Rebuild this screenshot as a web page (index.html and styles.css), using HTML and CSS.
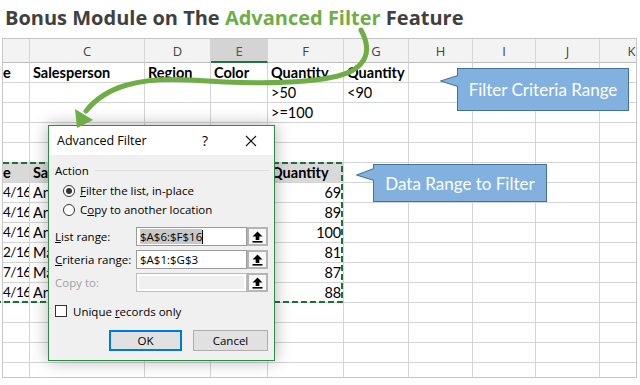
FILE: index.html
```html
<!DOCTYPE html>
<html>
<head>
<meta charset="utf-8">
<link rel="stylesheet" href="styles.css">
</head>
<body>
<h1 class="title">Bonus Module on The <span class="hl">Advanced Filter</span> Feature</h1>
<div class="sheet">
  <div class="grid">
    <div class="c h"></div><div class="c h">C</div><div class="c h">D</div><div class="c h sel">E</div><div class="c h">F</div><div class="c h">G</div><div class="c h">H</div><div class="c h">I</div><div class="c h">J</div><div class="c h">K</div>

    <div class="c b e0">e</div><div class="c b">Salesperson</div><div class="c b">Region</div><div class="c b">Color</div><div class="c b">Quantity</div><div class="c b">Quantity</div><div class="c"></div><div class="c"></div><div class="c"></div><div class="c"></div>

    <div class="c"></div><div class="c"></div><div class="c"></div><div class="c"></div><div class="c">&gt;50</div><div class="c">&lt;90</div><div class="c"></div><div class="c"></div><div class="c"></div><div class="c"></div>

    <div class="c"></div><div class="c"></div><div class="c"></div><div class="c"></div><div class="c">&gt;=100</div><div class="c"></div><div class="c"></div><div class="c"></div><div class="c"></div><div class="c"></div>

    <div class="c"></div><div class="c"></div><div class="c"></div><div class="c"></div><div class="c"></div><div class="c"></div><div class="c"></div><div class="c"></div><div class="c"></div><div class="c"></div>

    <div class="c"></div><div class="c"></div><div class="c"></div><div class="c"></div><div class="c"></div><div class="c"></div><div class="c"></div><div class="c"></div><div class="c"></div><div class="c"></div>

    <div class="c b g e0">e</div><div class="c b g">Sa</div><div class="c b g"></div><div class="c b g"></div><div class="c b g">Quantity</div><div class="c"></div><div class="c"></div><div class="c"></div><div class="c"></div><div class="c"></div>

    <div class="c r d">4/16</div><div class="c">An</div><div class="c"></div><div class="c"></div><div class="c r">69</div><div class="c"></div><div class="c"></div><div class="c"></div><div class="c"></div><div class="c"></div>

    <div class="c r d">4/16</div><div class="c">An</div><div class="c"></div><div class="c"></div><div class="c r">89</div><div class="c"></div><div class="c"></div><div class="c"></div><div class="c"></div><div class="c"></div>

    <div class="c r d">4/16</div><div class="c">An</div><div class="c"></div><div class="c"></div><div class="c r">100</div><div class="c"></div><div class="c"></div><div class="c"></div><div class="c"></div><div class="c"></div>

    <div class="c r d">2/16</div><div class="c">Ma</div><div class="c"></div><div class="c"></div><div class="c r">81</div><div class="c"></div><div class="c"></div><div class="c"></div><div class="c"></div><div class="c"></div>

    <div class="c r d">7/16</div><div class="c">Ma</div><div class="c"></div><div class="c"></div><div class="c r">87</div><div class="c"></div><div class="c"></div><div class="c"></div><div class="c"></div><div class="c"></div>

    <div class="c r d">4/16</div><div class="c">An</div><div class="c"></div><div class="c"></div><div class="c r">88</div><div class="c"></div><div class="c"></div><div class="c"></div><div class="c"></div><div class="c"></div>

    <div class="c"></div><div class="c"></div><div class="c"></div><div class="c"></div><div class="c"></div><div class="c"></div><div class="c"></div><div class="c"></div><div class="c"></div><div class="c"></div>

    <div class="c"></div><div class="c"></div><div class="c"></div><div class="c"></div><div class="c"></div><div class="c"></div><div class="c"></div><div class="c"></div><div class="c"></div><div class="c"></div>

    <div class="c"></div><div class="c"></div><div class="c"></div><div class="c"></div><div class="c"></div><div class="c"></div><div class="c"></div><div class="c"></div><div class="c"></div><div class="c"></div>

    <div class="c"></div><div class="c"></div><div class="c"></div><div class="c"></div><div class="c"></div><div class="c"></div><div class="c"></div><div class="c"></div><div class="c"></div><div class="c"></div>
  </div>
</div>

<svg class="overlay" width="640" height="385" viewBox="0 0 640 385">
  <rect x="-6" y="163" width="348" height="139" fill="none" stroke="#1f6e3b" stroke-width="2" stroke-dasharray="6 3"/>
</svg>

<div class="dialog">
  <div class="dlg-title">
    <span class="dlg-name">Advanced Filter</span>
    <span class="dlg-help">?</span>
    <span class="dlg-close"><svg width="12" height="12" viewBox="0 0 12 12"><path d="M1 1L11 11M11 1L1 11" stroke="#111" stroke-width="1.1"/></svg></span>
  </div>
  <div class="dlg-body">
    <div class="group"><span>Action</span><span class="group-line"></span></div>
    <div class="radio-row first"><span class="radio on"></span><span><u>F</u>ilter the list, in-place</span></div>
    <div class="radio-row"><span class="radio"></span><span>C<u>o</u>py to another location</span></div>

    <div class="field first">
      <span class="flabel"><u>L</u>ist range:</span>
      <span class="finput"><span class="selected">$A$6:$F$16</span><span class="caret"></span></span>
      <span class="fbtn"><svg width="11" height="12" viewBox="0 0 11 12"><path d="M5.5 0.5L10.5 5.5H7.3V9H3.7V5.5H0.5Z" fill="#000"/><rect x="0.5" y="10" width="10" height="1.6" fill="#000"/></svg></span>
    </div>
    <div class="field">
      <span class="flabel"><u>C</u>riteria range:</span>
      <span class="finput">$A$1:$G$3</span>
      <span class="fbtn"><svg width="11" height="12" viewBox="0 0 11 12"><path d="M5.5 0.5L10.5 5.5H7.3V9H3.7V5.5H0.5Z" fill="#000"/><rect x="0.5" y="10" width="10" height="1.6" fill="#000"/></svg></span>
    </div>
    <div class="field disabled">
      <span class="flabel">Copy to:</span>
      <span class="finput off"></span>
      <span class="fbtn"><svg width="11" height="12" viewBox="0 0 11 12"><path d="M5.5 0.5L10.5 5.5H7.3V9H3.7V5.5H0.5Z" fill="#000"/><rect x="0.5" y="10" width="10" height="1.6" fill="#000"/></svg></span>
    </div>

    <div class="check-row"><span class="checkbox"></span><span>Unique <u>r</u>ecords only</span></div>

    <div class="buttons">
      <span class="btn ok">OK</span>
      <span class="btn">Cancel</span>
    </div>
  </div>
</div>

<svg class="overlay" width="640" height="385" viewBox="0 0 640 385">
  <path d="M361 30 C372 50 368 68 338 76 C305 84 250 84 190 80 C140 77 106 86 86 111" fill="none" stroke="#70ad47" stroke-width="5" stroke-linecap="round"/>
  <polygon points="77,128 75,109 93,120" fill="#70ad47"/>
</svg>

<div class="callout c1">
  <svg class="pointer" width="20" height="45" viewBox="0 0 20 45"><polygon points="0,13 19,7 19,19" fill="#82b1e0"/><polyline points="18,7.5 0.5,13 18,18.5" fill="none" stroke="#41719c" stroke-width="1"/></svg>
  Filter Criteria Range
</div>
<div class="callout c2">
  <svg class="pointer" width="20" height="40" viewBox="0 0 20 40"><polygon points="0,11 19,4 19,17" fill="#82b1e0"/><polyline points="18,4.5 0.5,11 18,16.5" fill="none" stroke="#41719c" stroke-width="1"/></svg>
  Data Range to Filter
</div>
</body>
</html>
```

FILE: styles.css
```css
* { box-sizing: border-box; }

body {
  margin: 0;
  width: 640px;
  height: 385px;
  overflow: hidden;
  position: relative;
  background: #fff;
  font-family: Lato, "Liberation Sans", sans-serif;
}

.title {
  margin: 0;
  height: 38px;
  padding: 5px 0 0 5px;
  font-family: "Open Sans", sans-serif;
  font-weight: 700;
  font-size: 20px;
  line-height: 26px;
  color: #404040;
  white-space: nowrap;
}
.title .hl { color: #70ad47; }

.sheet {
  margin-left: 2px;
  width: 635px;
  height: 340px;
  border: 1px solid #c6c6c6;
  overflow: hidden;
}

.grid {
  display: grid;
  grid-template-columns: 27px 115px 66px 57px 76px 65px 64px 63px 64px 64px;
  grid-template-rows: 24px repeat(16, 20px);
  width: 661px;
}

.c {
  border-right: 1px solid #d4d4d4;
  border-bottom: 1px solid #d4d4d4;
  padding: 0 3px;
  font-size: 14.5px;
  line-height: 19px;
  color: #000;
  white-space: nowrap;
  overflow: hidden;
}
.c.b { font-weight: 700; }
.c.r { text-align: right; padding: 0 2px 0 0; letter-spacing: -0.2px; }
.c.d { font-size: 13.5px; letter-spacing: -0.5px; padding: 0 1px 0 0; }
.c.g { background: #d9d9d9; }
.c.e0 { padding-left: 0; }

.c.h {
  background: #f3f3f3;
  text-align: center;
  font-family: "Open Sans", sans-serif;
  font-size: 13px;
  line-height: 25px;
  color: #444;
  border-bottom-color: #bdbdbd;
  border-right-color: #d6d6d6;
}
.c.h.sel {
  background: #d4d4d4;
  color: #1e6e3f;
  border-bottom: 2px solid #217346;
}

.overlay {
  position: absolute;
  left: 0;
  top: 0;
  pointer-events: none;
}

/* dialog */
.dialog {
  position: absolute;
  left: 48px;
  top: 125px;
  width: 227px;
  height: 236px;
  border: 1px solid #2e8b45;
  background: #f0f0f0;
  box-shadow: 0 0 16px rgba(0, 0, 0, 0.3);
  font-family: "Open Sans", sans-serif;
  font-size: 11.5px;
  color: #000;
  display: flex;
  flex-direction: column;
}
.dlg-title {
  height: 29px;
  background: #fff;
  display: flex;
  align-items: center;
  padding-left: 8px;
  font-size: 12.5px;
}
.dlg-name { flex: 1; }
.dlg-help {
  width: 46px;
  text-align: center;
  font-size: 14px;
}
.dlg-close {
  width: 46px;
  display: flex;
  justify-content: center;
  align-items: center;
}
.dlg-body {
  flex: 1;
  padding: 7px 5px 0 6px;
}
.group {
  display: flex;
  align-items: center;
  gap: 6px;
  height: 16px;
}
.group-line {
  flex: 1;
  height: 1px;
  background: #dcdcdc;
}
.radio-row {
  display: flex;
  align-items: center;
  gap: 5px;
  height: 19px;
  padding-left: 8px;
}
.radio-row.first { margin-top: 3px; }
.radio {
  width: 12px;
  height: 12px;
  border: 1px solid #333;
  border-radius: 50%;
  background: #fff;
  position: relative;
}
.radio.on::after {
  content: "";
  position: absolute;
  left: 2px;
  top: 2px;
  width: 6px;
  height: 6px;
  border-radius: 50%;
  background: #333;
}

.field {
  display: flex;
  align-items: center;
  height: 19px;
  margin-top: 4px;
}
.field.first { margin-top: 8px; }
.flabel { width: 81px; }
.field.disabled .flabel { color: #a0a0a0; }
.finput {
  width: 111px;
  height: 19px;
  border: 1px solid #9a9a9a;
  background: #fff;
  padding: 0 3px;
  line-height: 17px;
  display: flex;
  align-items: center;
}
.finput.off {
  border-color: #bcbcbc;
  background: #f0f0f0;
  box-shadow: inset 0 0 0 2px #fff;
}
.selected { background: #c8c8c8; line-height: 15px; }
.caret { width: 1px; height: 14px; background: #000; }
.fbtn {
  width: 21px;
  height: 19px;
  border: 2px solid #b4b4b4;
  background: #f7f7f7;
  display: flex;
  align-items: center;
  justify-content: center;
}

.check-row {
  display: flex;
  align-items: center;
  gap: 6px;
  height: 16px;
  margin-top: 11px;
}
.checkbox {
  width: 12px;
  height: 12px;
  border: 1px solid #333;
  background: #fff;
}

.buttons {
  display: flex;
  justify-content: flex-end;
  gap: 11px;
  margin-top: 11px;
  padding-right: 1px;
}
.btn {
  width: 75px;
  height: 21px;
  border: 1px solid #adadad;
  background: #e1e1e1;
  display: flex;
  align-items: center;
  justify-content: center;
}
.btn.ok {
  width: 73px;
  border: 2px solid #0078d7;
}

/* callouts */
.callout {
  position: absolute;
  background: #82b1e0;
  border: 1px solid #41719c;
  color: #fff;
  font-family: Lato, sans-serif;
  font-size: 17px;
  display: flex;
  align-items: center;
  justify-content: center;
}
.callout .pointer {
  position: absolute;
  left: -18px;
  top: -1px;
}
.c1 { left: 457px; top: 68px; width: 172px; height: 43px; }
.c2 { left: 373px; top: 164px; width: 174px; height: 38px; }
```
